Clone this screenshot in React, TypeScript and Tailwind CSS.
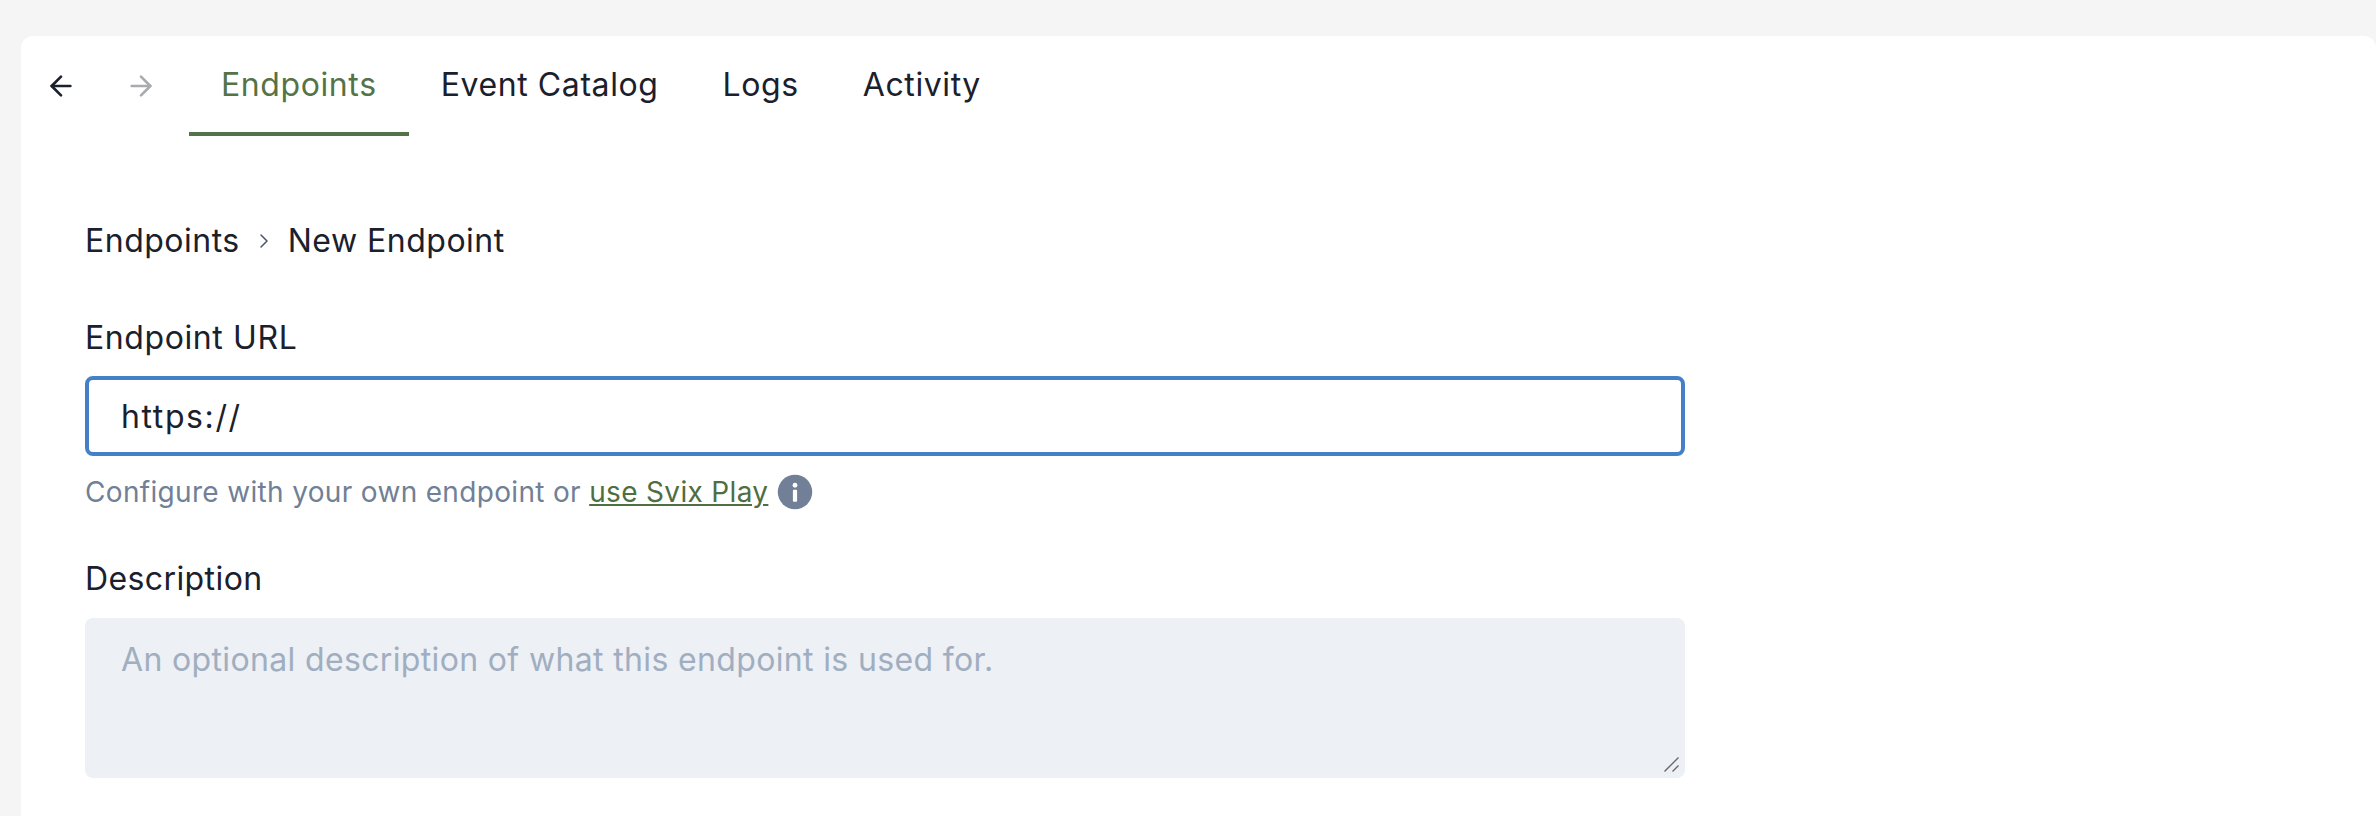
import { ArrowLeft, ArrowRight, ChevronRight } from "lucide-react";

const tabs = ["Endpoints", "Event Catalog", "Logs", "Activity"];

export default function App() {
  return (
    <div className="h-[816px] overflow-hidden bg-[#f5f5f5] pt-9 pl-[21px] font-['Inter',sans-serif] text-[#1a202c]">
      <div className="h-full rounded-t-xl bg-white">
        <div className="flex h-[100px] items-stretch">
          <div className="flex w-[168px] items-center gap-12 pl-6">
            <ArrowLeft className="size-8" strokeWidth={2} />
            <ArrowRight className="size-8 text-[#a9abaf]" strokeWidth={2} />
          </div>
          {tabs.map((tab, i) => (
            <div
              key={tab}
              className={[
                "flex items-center border-b-4 px-8 pt-0.5 text-[32px] tracking-[0.6px]",
                i === 0 ? "border-[#557348] text-[#557348]" : "border-transparent",
              ].join(" ")}
            >
              {tab}
            </div>
          ))}
        </div>

        <div className="w-[1664px] pt-[81px] pl-16">
          <div className="flex h-12 items-center text-[32px] tracking-[0.5px]">
            <span>Endpoints</span>
            <ChevronRight className="mx-3 size-6 text-[#4a5568]" strokeWidth={1.5} />
            <span>New Endpoint</span>
          </div>

          <label className="mt-[49px] block h-12 text-[32px] leading-[48px] tracking-[0.6px]">Endpoint URL</label>
          <input
            readOnly
            value="https://"
            className="mt-3.5 block h-20 w-full rounded-lg border-4 border-[#4480c8] px-8 text-[32px] tracking-[1.6px] outline-none"
          />
          <div className="mt-[15px] flex items-center text-[28px] tracking-[0.33px] text-[#718096]">
            <span>Configure with your own endpoint or&nbsp;</span>
            <a className="text-[#4f6e42] underline">use Svix Play</a>
            <svg className="ml-[9px] size-9" viewBox="0 0 24 24">
              <circle cx="12" cy="12" r="11.5" fill="#718096" />
              <circle cx="12" cy="7.5" r="1.6" fill="#fff" />
              <rect x="10.6" y="10.5" width="2.8" height="8" rx="0.6" fill="#fff" />
            </svg>
          </div>

          <label className="mt-[42px] block h-12 text-[32px] leading-[48px] tracking-[0.4px]">Description</label>
          <div className="relative mt-[15px]">
            <textarea
              readOnly
              placeholder="An optional description of what this endpoint is used for."
              className="block h-40 w-full resize-none rounded-lg bg-[#edf0f5] px-9 py-[18px] text-[32px] tracking-[0.35px] outline-none placeholder:text-[#a0aec0]"
            />
            <svg className="absolute right-1.5 bottom-1.5 size-[15px]" viewBox="0 0 15 15" stroke="#666" strokeWidth="1.4">
              <path d="M0.5 14.5 14.5 0.5M8.5 14.5 14.5 8.5" />
            </svg>
          </div>
        </div>
      </div>
    </div>
  );
}
